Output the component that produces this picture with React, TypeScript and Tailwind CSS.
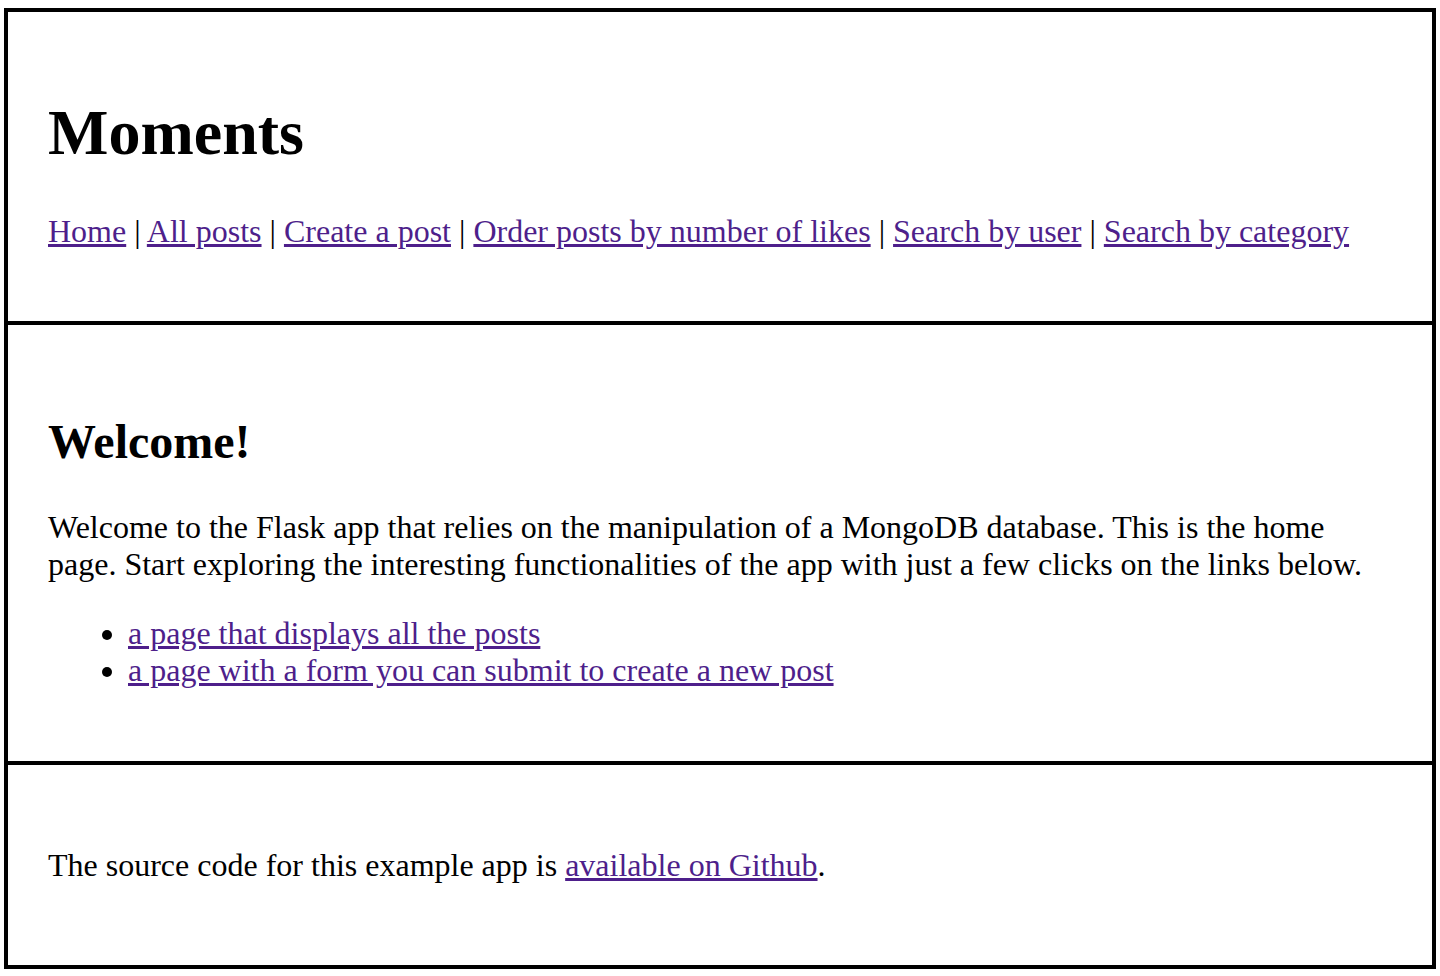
const navLinks = [
  'Home',
  'All posts',
  'Create a post',
  'Order posts by number of likes',
  'Search by user',
  'Search by category',
];

const link = 'text-[#4e1f8b] underline';

export default function App() {
  return (
    <div className="min-h-[976px] bg-white pt-[8px] text-black font-['Liberation_Serif','Times_New_Roman',serif]">
      <div className="mx-[4px] border-4 border-black">
        {/* Header */}
        <header className="border-b-4 border-black px-[40px] pt-[84px] pb-[71px]">
          <h1 className="text-[64px] font-bold leading-[74px]">Moments</h1>
          <nav className="mt-[43px] text-[32px] leading-[37px]">
            {navLinks.map((label, i) => (
              <span key={label}>
                {i > 0 && ' | '}
                <a href="#" className={link}>
                  {label}
                </a>
              </span>
            ))}
          </nav>
        </header>

        {/* Main */}
        <main className="border-b-4 border-black px-[40px] pt-[89px] pb-[72px]">
          <h2 className="text-[48px] font-bold leading-[55px]">Welcome!</h2>
          <p className="mt-[40px] text-[32px] leading-[37px]">
            Welcome to the Flask app that relies on the manipulation of a MongoDB database. This is the home
            page. Start exploring the interesting functionalities of the app with just a few clicks on the links below.
          </p>
          <ul className="mt-[32px] list-disc pl-[80px] text-[32px] leading-[37px]">
            <li>
              <a href="#" className={link}>
                a page that displays all the posts
              </a>
            </li>
            <li>
              <a href="#" className={link}>
                a page with a form you can submit to create a new post
              </a>
            </li>
          </ul>
        </main>

        {/* Footer */}
        <footer className="px-[40px] pt-[82px] pb-[81px]">
          <p className="text-[32px] leading-[37px]">
            The source code for this example app is{' '}
            <a href="#" className={link}>
              available on Github
            </a>
            .
          </p>
        </footer>
      </div>
    </div>
  );
}
